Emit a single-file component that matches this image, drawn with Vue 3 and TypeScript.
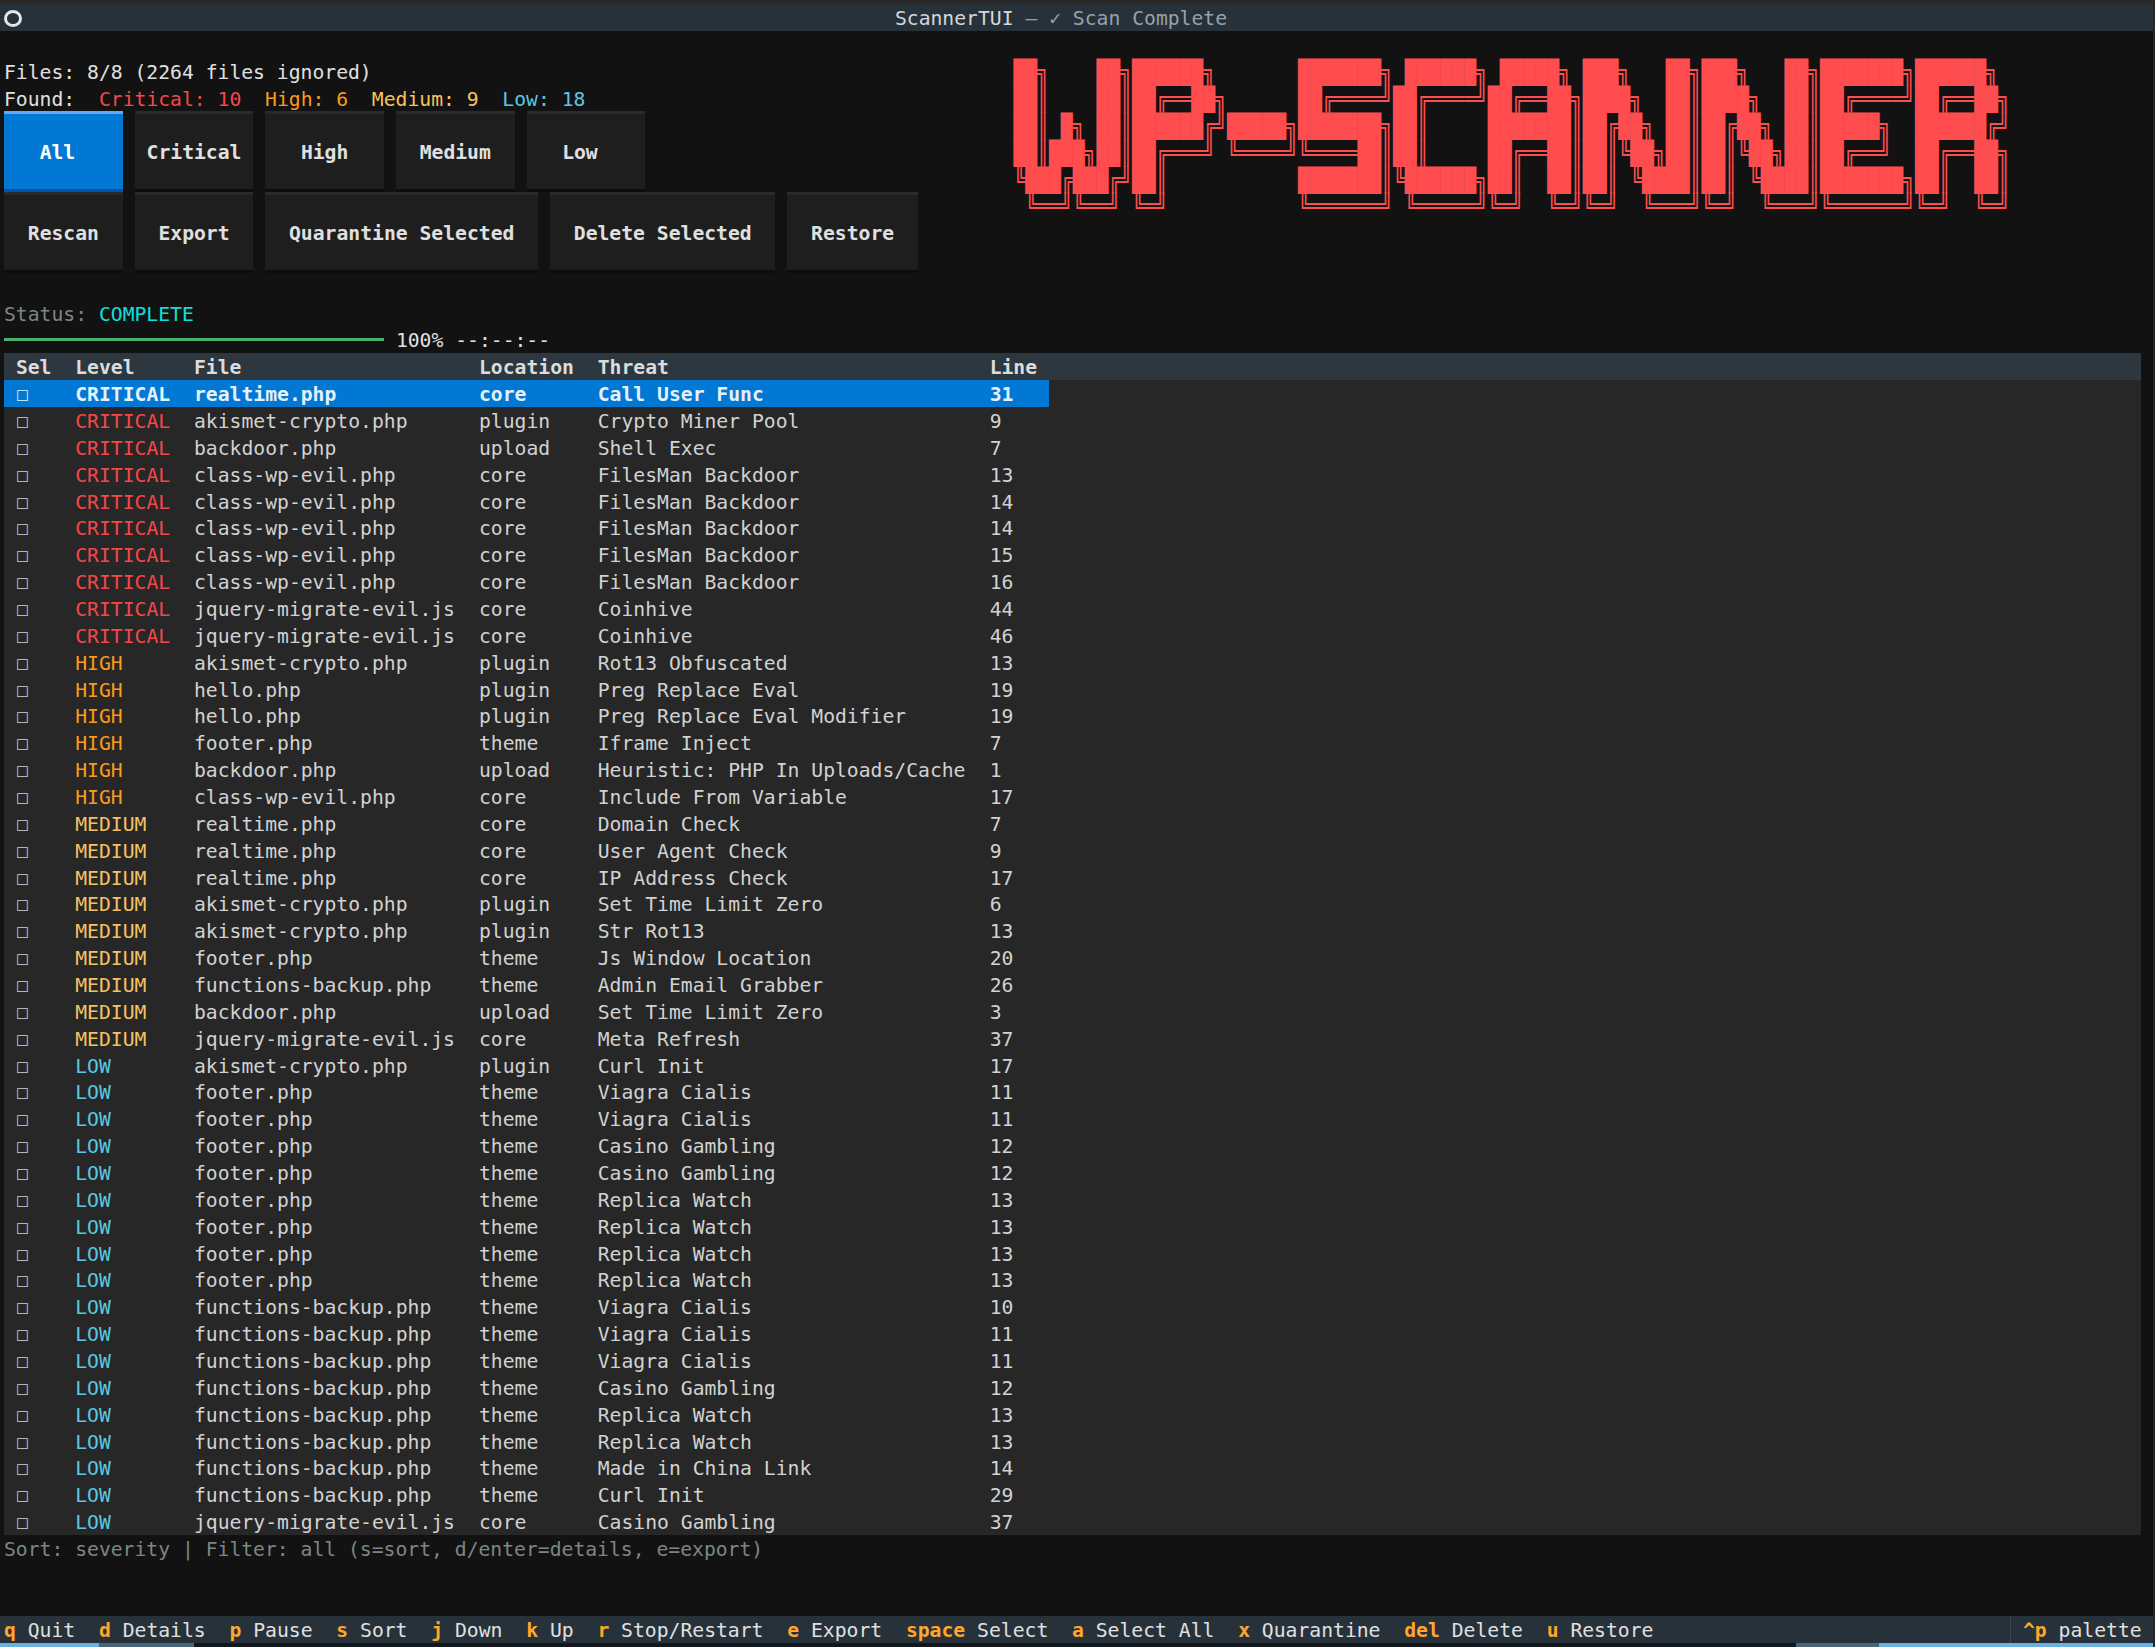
<script setup lang="ts">
type Level = 'critical' | 'high' | 'medium' | 'low';

interface Finding {
  level: Level;
  file: string;
  location: string;
  threat: string;
  line: number;
}

const raw: [Level, string, string, string, number][] = [
  ['critical', 'realtime.php', 'core', 'Call User Func', 31],
  ['critical', 'akismet-crypto.php', 'plugin', 'Crypto Miner Pool', 9],
  ['critical', 'backdoor.php', 'upload', 'Shell Exec', 7],
  ['critical', 'class-wp-evil.php', 'core', 'FilesMan Backdoor', 13],
  ['critical', 'class-wp-evil.php', 'core', 'FilesMan Backdoor', 14],
  ['critical', 'class-wp-evil.php', 'core', 'FilesMan Backdoor', 14],
  ['critical', 'class-wp-evil.php', 'core', 'FilesMan Backdoor', 15],
  ['critical', 'class-wp-evil.php', 'core', 'FilesMan Backdoor', 16],
  ['critical', 'jquery-migrate-evil.js', 'core', 'Coinhive', 44],
  ['critical', 'jquery-migrate-evil.js', 'core', 'Coinhive', 46],
  ['high', 'akismet-crypto.php', 'plugin', 'Rot13 Obfuscated', 13],
  ['high', 'hello.php', 'plugin', 'Preg Replace Eval', 19],
  ['high', 'hello.php', 'plugin', 'Preg Replace Eval Modifier', 19],
  ['high', 'footer.php', 'theme', 'Iframe Inject', 7],
  ['high', 'backdoor.php', 'upload', 'Heuristic: PHP In Uploads/Cache', 1],
  ['high', 'class-wp-evil.php', 'core', 'Include From Variable', 17],
  ['medium', 'realtime.php', 'core', 'Domain Check', 7],
  ['medium', 'realtime.php', 'core', 'User Agent Check', 9],
  ['medium', 'realtime.php', 'core', 'IP Address Check', 17],
  ['medium', 'akismet-crypto.php', 'plugin', 'Set Time Limit Zero', 6],
  ['medium', 'akismet-crypto.php', 'plugin', 'Str Rot13', 13],
  ['medium', 'footer.php', 'theme', 'Js Window Location', 20],
  ['medium', 'functions-backup.php', 'theme', 'Admin Email Grabber', 26],
  ['medium', 'backdoor.php', 'upload', 'Set Time Limit Zero', 3],
  ['medium', 'jquery-migrate-evil.js', 'core', 'Meta Refresh', 37],
  ['low', 'akismet-crypto.php', 'plugin', 'Curl Init', 17],
  ['low', 'footer.php', 'theme', 'Viagra Cialis', 11],
  ['low', 'footer.php', 'theme', 'Viagra Cialis', 11],
  ['low', 'footer.php', 'theme', 'Casino Gambling', 12],
  ['low', 'footer.php', 'theme', 'Casino Gambling', 12],
  ['low', 'footer.php', 'theme', 'Replica Watch', 13],
  ['low', 'footer.php', 'theme', 'Replica Watch', 13],
  ['low', 'footer.php', 'theme', 'Replica Watch', 13],
  ['low', 'footer.php', 'theme', 'Replica Watch', 13],
  ['low', 'functions-backup.php', 'theme', 'Viagra Cialis', 10],
  ['low', 'functions-backup.php', 'theme', 'Viagra Cialis', 11],
  ['low', 'functions-backup.php', 'theme', 'Viagra Cialis', 11],
  ['low', 'functions-backup.php', 'theme', 'Casino Gambling', 12],
  ['low', 'functions-backup.php', 'theme', 'Replica Watch', 13],
  ['low', 'functions-backup.php', 'theme', 'Replica Watch', 13],
  ['low', 'functions-backup.php', 'theme', 'Made in China Link', 14],
  ['low', 'functions-backup.php', 'theme', 'Curl Init', 29],
  ['low', 'jquery-migrate-evil.js', 'core', 'Casino Gambling', 37],
];

const findings: Finding[] = raw.map(([level, file, location, threat, line]) => ({
  level,
  file,
  location,
  threat,
  line,
}));

const columns = ['Sel', 'Level', 'File', 'Location', 'Threat', 'Line'];

const counts = [
  { cls: 'critical', text: 'Critical: 10' },
  { cls: 'high', text: 'High: 6' },
  { cls: 'medium', text: 'Medium: 9' },
  { cls: 'low', text: 'Low: 18' },
];

const filterButtons = [
  { label: 'All', active: true },
  { label: 'Critical' },
  { label: 'High' },
  { label: 'Medium' },
  { label: 'Low' },
];
const actionButtons = ['Rescan', 'Export', 'Quarantine Selected', 'Delete Selected', 'Restore'];

const bindings = [
  ['q', 'Quit'],
  ['d', 'Details'],
  ['p', 'Pause'],
  ['s', 'Sort'],
  ['j', 'Down'],
  ['k', 'Up'],
  ['r', 'Stop/Restart'],
  ['e', 'Export'],
  ['space', 'Select'],
  ['a', 'Select All'],
  ['x', 'Quarantine'],
  ['del', 'Delete'],
  ['u', 'Restore'],
];

// figlet "ANSI Shadow", one entry per letter
const letters: string[][] = [
  ['██╗    ██╗', '██║    ██║', '██║ █╗ ██║', '██║███╗██║', '╚███╔███╔╝', ' ╚══╝╚══╝ '],
  ['██████╗ ', '██╔══██╗', '██████╔╝', '██╔═══╝ ', '██║     ', '╚═╝     '],
  ['      ', '      ', '█████╗', '╚════╝', '      ', '      '],
  ['███████╗', '██╔════╝', '███████╗', '╚════██║', '███████║', '╚══════╝'],
  [' ██████╗', '██╔════╝', '██║     ', '██║     ', '╚██████╗', ' ╚═════╝'],
  [' █████╗ ', '██╔══██╗', '███████║', '██╔══██║', '██║  ██║', '╚═╝  ╚═╝'],
  ['███╗   ██╗', '████╗  ██║', '██╔██╗ ██║', '██║╚██╗██║', '██║ ╚████║', '╚═╝  ╚═══╝'],
  ['███╗   ██╗', '████╗  ██║', '██╔██╗ ██║', '██║╚██╗██║', '██║ ╚████║', '╚═╝  ╚═══╝'],
  ['███████╗', '██╔════╝', '█████╗  ', '██╔══╝  ', '███████╗', '╚══════╝'],
  ['██████╗ ', '██╔══██╗', '██████╔╝', '██╔══██╗', '██║  ██║', '╚═╝  ╚═╝'],
];
const banner = [0, 1, 2, 3, 4, 5].map((i) => letters.map((l) => l[i]).join('')).join('\n');
</script>

<template>
  <div class="app">
    <div class="top-edge" />
    <header class="title-bar">
      <span class="ring" />
      <span class="title"><b>ScannerTUI</b> — ✓ Scan Complete</span>
    </header>

    <section class="head">
      <div class="head-left">
        <div class="line">Files: 8/8 (2264 files ignored)</div>
        <div class="line found">
          <span>Found:</span>
          <span v-for="c in counts" :key="c.cls" :class="c.cls">{{ c.text }}</span>
        </div>
        <div class="btn-row">
          <button
            v-for="b in filterButtons"
            :key="b.label"
            class="btn"
            :class="{ active: b.active, odd: b.label.length % 2 === 1 }"
          >
            {{ b.label }}
          </button>
        </div>
        <div class="btn-row">
          <button v-for="b in actionButtons" :key="b" class="btn wide">{{ b }}</button>
        </div>
        <div class="line status">Status: <span class="complete">COMPLETE</span></div>
        <div class="progress">
          <div class="bar" />
          <span class="eta">100% --:--:--</span>
        </div>
      </div>
      <pre class="banner">{{ banner }}</pre>
    </section>

    <section class="table">
      <div class="tr thead">
        <div class="cells">
          <span v-for="c in columns" :key="c">{{ c }}</span>
        </div>
      </div>
      <div v-for="(f, i) in findings" :key="i" class="tr">
        <div class="cells" :class="{ cursor: i === 0 }">
          <span class="check">☐</span>
          <span :class="f.level">{{ f.level.toUpperCase() }}</span>
          <span>{{ f.file }}</span>
          <span>{{ f.location }}</span>
          <span>{{ f.threat }}</span>
          <span>{{ f.line }}</span>
        </div>
      </div>
    </section>

    <div class="line sort">Sort: severity | Filter: all (s=sort, d/enter=details, e=export)</div>

    <footer class="footer">
      <div class="keys">
        <span v-for="[k, label] in bindings" :key="k" class="binding"><b>{{ k }}</b> {{ label }}</span>
      </div>
      <div class="palette"><b>^p</b> palette</div>
    </footer>
    <div class="bottom-edge">
      <i class="seg blue a" />
      <i class="seg slate b" />
      <i class="gap" />
      <i class="seg slate c" />
      <i class="seg blue d" />
    </div>
  </div>
</template>

<style>
html,
body {
  margin: 0;
  background: #121212;
}
</style>

<style scoped>
.app {
  --c: 11.875px;
  --r: 26.87px;
  box-sizing: border-box;
  width: 2155px;
  height: 1647px;
  overflow: hidden;
  display: flex;
  flex-direction: column;
  border-right: 2px solid #262626;
  background: #121212;
  color: #e0e0e0;
  font-family: 'DejaVu Sans Mono', 'Liberation Mono', monospace;
  font-size: 19.72px;
  /* taller than the row so the glyphs sit a little lower in their cell */
  line-height: calc(var(--r) + 3px);
  white-space: pre;
}
.top-edge {
  height: 4px;
  background: #2a2a2a;
}
.title-bar {
  position: relative;
  height: var(--r);
  display: flex;
  justify-content: center;
  padding-right: 31px;
  background: #26313a;
  color: #98a2a8;
}
.title b {
  font-weight: 400;
  color: #d4d8da;
}
.ring {
  box-sizing: border-box;
  position: absolute;
  left: 4px;
  top: 6px;
  width: 18px;
  height: 17px;
  border: 3px solid #e6e6e6;
  border-radius: 50%;
}

.head {
  display: flex;
}
.head-left {
  box-sizing: border-box;
  width: calc(var(--c) * 85 + 4px);
  padding: var(--r) 0 0 4px;
  flex: none;
}
.line {
  height: var(--r);
}
.found {
  display: flex;
  gap: calc(var(--c) * 2);
}
.critical {
  color: #f4474a;
}
.high {
  color: #fb9a1a;
}
.medium {
  color: #f6c25f;
}
.low {
  color: #5ac8e0;
}
.btn-row {
  display: flex;
  gap: var(--c);
}
.btn {
  box-sizing: border-box;
  height: calc(var(--r) * 3);
  min-width: calc(var(--c) * 10);
  padding: 3px 0 0;
  border: 0;
  border-top: 3px solid #2a2a2a;
  border-bottom: 3px solid #0d0d0d;
  background: #1e1e1e;
  color: #e0e0e0;
  font: inherit;
  font-weight: 700;
  white-space: pre;
}
.btn.wide {
  padding: 3px calc(var(--c) * 2) 0;
}
.btn.odd {
  padding-right: var(--c);
}
.btn.active {
  border-top-color: #64a8f5;
  border-bottom-color: #0053aa;
  background: #0178d4;
  color: #fff;
}
.status {
  margin-top: var(--r);
  color: #7c8684;
}
.complete {
  color: #0ce0dc;
}
.progress {
  display: flex;
  align-items: center;
  gap: var(--c);
  height: var(--r);
}
.eta {
  padding-top: 3px;
}
.bar {
  width: calc(var(--c) * 32);
  height: 3px;
  background: #4caf6e;
}
.banner {
  margin: calc(var(--r) + 1px) 0 0;
  height: calc(var(--r) * 6 - 1px);
  font: inherit;
  line-height: 23px;
  color: #ff4d4f;
  transform: scaleY(1.1683);
  transform-origin: top left;
}

.table {
  margin: 0 12px 0 4px;
  background: #272727;
  color: #d2d2d2;
}
.tr {
  height: var(--r);
}
.cells {
  width: calc(var(--c) * 88);
  height: var(--r);
  display: grid;
  grid-template-columns:
    calc(var(--c) * 5) calc(var(--c) * 10) calc(var(--c) * 24) calc(var(--c) * 10)
    calc(var(--c) * 33) calc(var(--c) * 6);
}
.cells > span {
  padding-left: var(--c);
}
.thead {
  background: #2d3740;
  color: #dcdcdc;
  font-weight: 700;
}
.cursor {
  background: #0178d4;
  color: #fff;
  font-weight: 700;
}
.cursor > span {
  color: #e4f1fb;
}
.check {
  font-size: 21px;
  font-weight: 400;
}

.sort {
  flex: none;
  color: #7c8684;
  padding-left: 4px;
  margin-bottom: calc(var(--r) * 2);
}
.footer {
  display: flex;
  justify-content: space-between;
  height: var(--r);
  background: #26313a;
  color: #e0e0e0;
}
.keys {
  display: flex;
  gap: calc(var(--c) * 2);
  padding-left: 4px;
}
.binding b,
.palette b {
  color: #ffa62b;
  font-weight: 700;
}
.palette {
  box-sizing: border-box;
  width: 143px;
  padding-left: 12px;
  border-left: 1px solid #3a454e;
}
.bottom-edge {
  flex: 1;
  display: flex;
  background: #12171b;
}
.seg {
  display: block;
}
.gap {
  flex: 1;
}
.blue {
  background: #6cb0e0;
}
.slate {
  background: #4a6478;
}
.a {
  width: 99px;
}
.b {
  width: 95px;
}
.c {
  width: 83px;
}
.d {
  width: 274px;
}
</style>
